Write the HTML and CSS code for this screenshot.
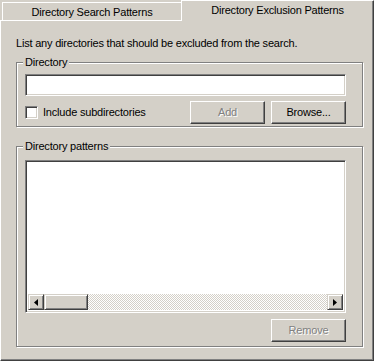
FILE: index.html
```html
<!DOCTYPE html>
<html>
<head>
    <title>Exclusion Patterns</title>
    <link rel="stylesheet" href="styles.css">
</head>
<body>
    <!-- tab strip -->
    <div class="tabs">
        <div class="tab">Directory Search Patterns</div>
        <div class="tab tab-active">Directory Exclusion Patterns</div>
    </div>

    <!-- tab page -->
    <div class="panel">
        <p class="intro">List any directories that should be excluded from the search.</p>

        <div class="group group-dir">
            <span class="group-title">Directory</span>
            <input class="field" type="text">
            <div class="row">
                <label class="check"><span class="checkbox"></span>Include subdirectories</label>
                <div class="buttons">
                    <button class="btn" disabled>Add</button>
                    <button class="btn">Browse...</button>
                </div>
            </div>
        </div>

        <div class="group group-list">
            <span class="group-title">Directory patterns</span>
            <div class="listbox">
                <div class="list-items"></div>
                <div class="hscroll">
                    <div class="sb-btn">
                        <svg width="4" height="7" viewBox="0 0 4 7"><polygon points="4,0 4,7 0,3.5" fill="#000"/></svg>
                    </div>
                    <div class="sb-thumb"></div>
                    <div class="sb-track"></div>
                    <div class="sb-btn">
                        <svg width="4" height="7" viewBox="0 0 4 7"><polygon points="0,0 0,7 4,3.5" fill="#000"/></svg>
                    </div>
                </div>
            </div>
            <div class="actions">
                <button class="btn" disabled>Remove</button>
            </div>
        </div>
    </div>
</body>
</html>
```

FILE: styles.css
```css
/* classic dialog look */
body {
    margin: 0;
    width: 374px;
    height: 361px;
    background: #d4d0c8;
    font-family: 'Liberation Sans', Arial, sans-serif;
    font-size: 11px;
    letter-spacing: -0.2px;
    line-height: 13px;
    color: #000;
}

/* tabs */
.tabs {
    display: flex;
    align-items: flex-end;
    height: 20px;
}

.tab {
    box-sizing: border-box;
    width: 179px;
    height: 18px;
    margin-left: 2px;
    padding-top: 3px;
    text-align: center;
    border-top: 1px solid #fff;
    border-left: 1px solid #fff;
}

.tab-active {
    position: relative;
    z-index: 1;
    width: 193px;
    height: 21px;
    margin-left: 0;
    margin-bottom: -1px;
    background: #d4d0c8;
    border-right: 1px solid #404040;
    box-shadow: inset -1px 0 #808080;
}

/* page */
.panel {
    box-sizing: border-box;
    height: 341px;
    padding: 0 10px 0 15px;
    border: 1px solid;
    border-color: #fff #404040 #404040 #fff;
    box-shadow: inset -1px -1px #808080;
}

.intro {
    margin: 16px 0 12px 0;
}

/* group boxes */
.group {
    position: relative;
    border: 1px solid #808080;
    box-shadow: inset 1px 1px #fff, 1px 1px #fff;
    padding: 11px 16px 2px 8px;
}

.group-list {
    margin-top: 19px;
    padding-top: 13px;
    padding-bottom: 4px;
}

.group-title {
    position: absolute;
    top: -7px;
    left: 6px;
    padding: 0 2px;
    background: #d4d0c8;
}

/* sunken fields */
.field,
.listbox,
.checkbox {
    box-sizing: border-box;
    background: #fff;
    border: 1px solid;
    border-color: #808080 #fff #fff #808080;
    box-shadow: inset 1px 1px #404040, inset -1px -1px #d4d0c8;
}

.field {
    display: block;
    width: 100%;
    height: 22px;
    margin: 0;
    padding: 0;
    outline: none;
}

.row {
    display: flex;
    align-items: center;
    margin-top: 5px;
    height: 23px;
}

.check {
    display: flex;
    align-items: center;
}

.checkbox {
    width: 13px;
    height: 13px;
    margin-right: 5px;
}

.buttons {
    display: flex;
    gap: 6px;
    margin-left: auto;
}

/* push buttons */
.btn {
    box-sizing: border-box;
    width: 75px;
    height: 23px;
    padding: 0;
    font: inherit;
    letter-spacing: inherit;
    color: #000;
    background: #d4d0c8;
    border: 1px solid;
    border-color: #fff #404040 #404040 #fff;
    box-shadow: inset -1px -1px #808080;
}

.btn:disabled {
    color: #808080;
    text-shadow: 1px 1px #fff;
}

/* list box */
.listbox {
    display: flex;
    flex-direction: column;
    height: 153px;
    padding: 2px;
}

.list-items {
    flex: 1;
}

.hscroll {
    display: flex;
    height: 16px;
}

.sb-btn,
.sb-thumb {
    box-sizing: border-box;
    height: 16px;
    background: #d4d0c8;
    border: 1px solid;
    border-color: #d4d0c8 #404040 #404040 #d4d0c8;
    box-shadow: inset 1px 1px #fff, inset -1px -1px #808080;
}

.sb-btn {
    width: 16px;
    display: flex;
    align-items: center;
    justify-content: center;
}

.sb-thumb {
    width: 44px;
}

.sb-track {
    flex: 1;
    background: repeating-conic-gradient(#fff 0 25%, #d4d0c8 0 50%) 0 0 / 2px 2px;
}

.actions {
    display: flex;
    justify-content: flex-end;
    margin-top: 6px;
}
```
